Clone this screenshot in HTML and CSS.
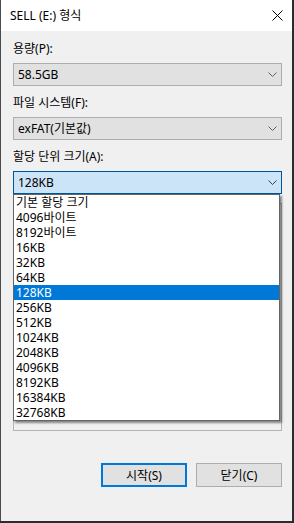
FILE: index.html
```html
<!DOCTYPE html>
<html lang="ko">
<head>
    <meta charset="UTF-8">
    <meta name="viewport" content="width=device-width, initial-scale=1.0">
    <title>SELL (E:) 형식</title>
    <link rel="stylesheet" href="styles.css">
</head>
<body>
    <div class="window">
        <div class="titlebar">
            <span class="title">SELL (E:) 형식</span>
            <svg class="close" width="11" height="11" viewBox="0 0 11 11">
                <path d="M0.5 0.5 L10.5 10.5 M10.5 0.5 L0.5 10.5" stroke="#000" stroke-width="1" fill="none"/>
            </svg>
        </div>
        <div class="content">
            <div class="field-label">용량(P):</div>
            <div class="combo">
                <span>58.5GB</span>
                <svg class="chevron" width="9" height="5" viewBox="0 0 9 5"><path d="M0.5 0.5 L4.5 4.5 L8.5 0.5" stroke="#606060" fill="none"/></svg>
            </div>

            <div class="field-label">파일 시스템(F):</div>
            <div class="combo">
                <span>exFAT(기본값)</span>
                <svg class="chevron" width="9" height="5" viewBox="0 0 9 5"><path d="M0.5 0.5 L4.5 4.5 L8.5 0.5" stroke="#606060" fill="none"/></svg>
            </div>

            <div class="field-label">할당 단위 크기(A):</div>
            <div class="combo-wrap">
                <div class="combo active">
                    <span>128KB</span>
                    <svg class="chevron" width="9" height="5" viewBox="0 0 9 5"><path d="M0.5 0.5 L4.5 4.5 L8.5 0.5" stroke="#404040" fill="none"/></svg>
                </div>
                <ul class="dropdown">
                    <li>기본 할당 크기</li>
                    <li>4096바이트</li>
                    <li>8192바이트</li>
                    <li>16KB</li>
                    <li>32KB</li>
                    <li>64KB</li>
                    <li class="selected">128KB</li>
                    <li>256KB</li>
                    <li>512KB</li>
                    <li>1024KB</li>
                    <li>2048KB</li>
                    <li>4096KB</li>
                    <li>8192KB</li>
                    <li>16384KB</li>
                    <li>32768KB</li>
                </ul>
            </div>

            <div class="options-box"></div>

            <div class="buttons">
                <button class="btn primary">시작(S)</button>
                <button class="btn">닫기(C)</button>
            </div>
        </div>
    </div>
</body>
</html>
```

FILE: styles.css
```css
body {
    margin: 0;
    background-color: #2a2c31;
    font-family: "Noto Sans", "Noto Sans CJK KR", sans-serif;
    font-size: 12px;
    color: #000;
}
.window {
    width: 291px;
    height: 521px;
    border-left: 1px solid #4a4c52;
    background-color: #f0f0f0;
    display: flex;
    flex-direction: column;
}
.titlebar {
    height: 31px;
    background-color: #fff;
    display: flex;
    align-items: center;
    justify-content: space-between;
    padding: 0 9px 0 9px;
}
.title {
    line-height: 16px;
}
.close {
    display: block;
    margin-top: -1px;
}
.content {
    padding: 10px 10px 0 12px;
    display: flex;
    flex-direction: column;
}
.field-label {
    line-height: 16px;
    margin-bottom: 6px;
}
.combo {
    box-sizing: border-box;
    height: 23px;
    border: 1px solid #adadad;
    background-color: #e1e1e1;
    display: flex;
    align-items: center;
    justify-content: space-between;
    padding: 0 4px 0 4px;
    margin-bottom: 9px;
}
.combo span {
    line-height: 16px;
}
.combo.active {
    border-color: #005499;
    background-color: #cce4f7;
    margin-bottom: 0;
}
.chevron {
    display: block;
}
.combo-wrap {
    position: relative;
    z-index: 2;
}
.dropdown {
    position: absolute;
    top: 23px;
    left: 0;
    width: 267px;
    box-sizing: border-box;
    margin: 0;
    padding: 0;
    list-style: none;
    background-color: #fff;
    border: 1px solid #646464;
    box-shadow: 2px 2px 2px rgba(0, 0, 0, 0.45);
}
.dropdown li {
    height: 15px;
    line-height: 15px;
    padding-left: 2px;
    white-space: nowrap;
}
.dropdown li.selected {
    background-color: #0078d7;
    color: #fff;
}
.options-box {
    box-sizing: border-box;
    height: 228px;
    margin-top: 9px;
    border: 1px solid #b4b4b4;
}
.buttons {
    display: flex;
    justify-content: flex-end;
    gap: 9px;
    margin-top: 32px;
}
.btn {
    box-sizing: border-box;
    width: 86px;
    height: 24px;
    padding: 0;
    border: 1px solid #adadad;
    background-color: #e1e1e1;
    font-family: inherit;
    font-size: 12px;
    color: #000;
}
.btn.primary {
    border: 2px solid #0078d7;
}
```
